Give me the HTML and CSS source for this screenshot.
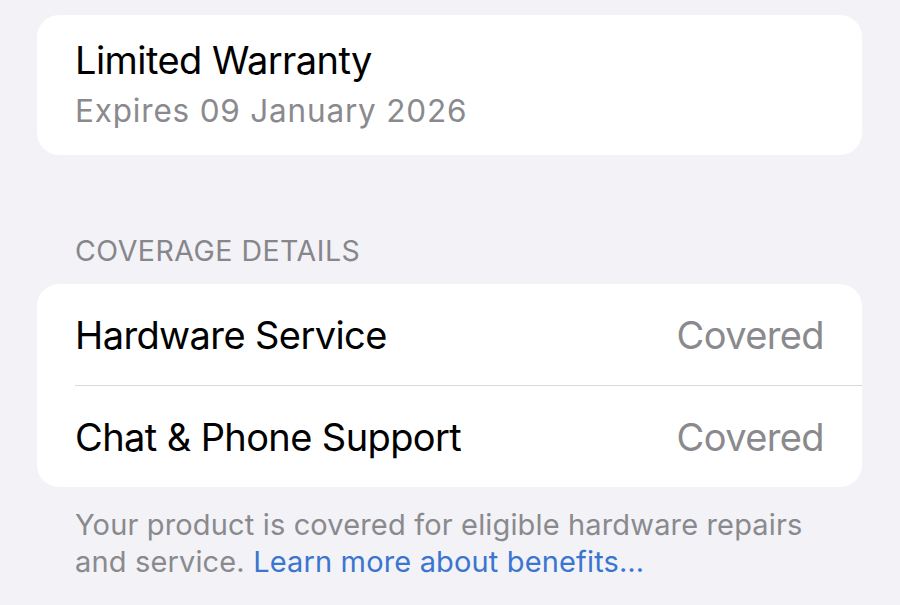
FILE: index.html
```html
<!DOCTYPE html>
<html lang="en">
<head>
    <meta charset="UTF-8">
    <meta name="viewport" content="width=device-width, initial-scale=1.0">
    <title>Coverage</title>
    <link rel="stylesheet" href="styles.css">
</head>
<body>
    <div class="page">
        <div class="card warranty">
            <div class="warranty-title">Limited Warranty</div>
            <div class="warranty-sub">Expires 09 January 2026</div>
        </div>

        <div class="section-header">COVERAGE DETAILS</div>
        <div class="card list">
            <div class="list-row">
                <span class="row-label">Hardware Service</span>
                <span class="row-value">Covered</span>
            </div>
            <div class="list-row">
                <span class="row-label">Chat &amp; Phone Support</span>
                <span class="row-value">Covered</span>
            </div>
        </div>
        <div class="section-footer">
            Your product is covered for eligible hardware repairs and service. <a href="#">Learn more about benefits…</a>
        </div>
    </div>
</body>
</html>
```

FILE: styles.css
```css
body {
    margin: 0;
    background: #F2F2F7;
    color: #000;
    font-family: 'Inter', 'Liberation Sans', sans-serif;
}
.page {
    padding: 15px 38px 0 37px;
}
.card {
    background: #fff;
    border-radius: 22px;
}
.warranty {
    padding: 21px 37px 22px 38px;
}
.warranty-title {
    font-size: 38px;
    line-height: 48px;
    letter-spacing: -0.55px;
}
.warranty-sub {
    margin-top: 5px;
    font-size: 31.5px;
    line-height: 44px;
    letter-spacing: 0.8px;
    color: #8A8A8E;
}
.section-header {
    margin: 78px 0 15px 38px;
    font-size: 28.5px;
    line-height: 36px;
    letter-spacing: 0.5px;
    color: #86868B;
}
.list {
    padding-left: 38px;
}
.list-row {
    display: flex;
    justify-content: space-between;
    align-items: center;
    padding: 27px 38px 26px 0;
    font-size: 38px;
    line-height: 48px;
    letter-spacing: -0.6px;
}
.list-row + .list-row {
    border-top: 1px solid #D9D9DD;
}
.row-value {
    color: #8A8A8E;
}
.section-footer {
    margin: 19px 20px 0 38px;
    font-size: 29px;
    line-height: 37px;
    letter-spacing: 0.15px;
    color: #8A8A8E;
}
.section-footer a {
    color: #3A75CF;
    text-decoration: none;
}
```
